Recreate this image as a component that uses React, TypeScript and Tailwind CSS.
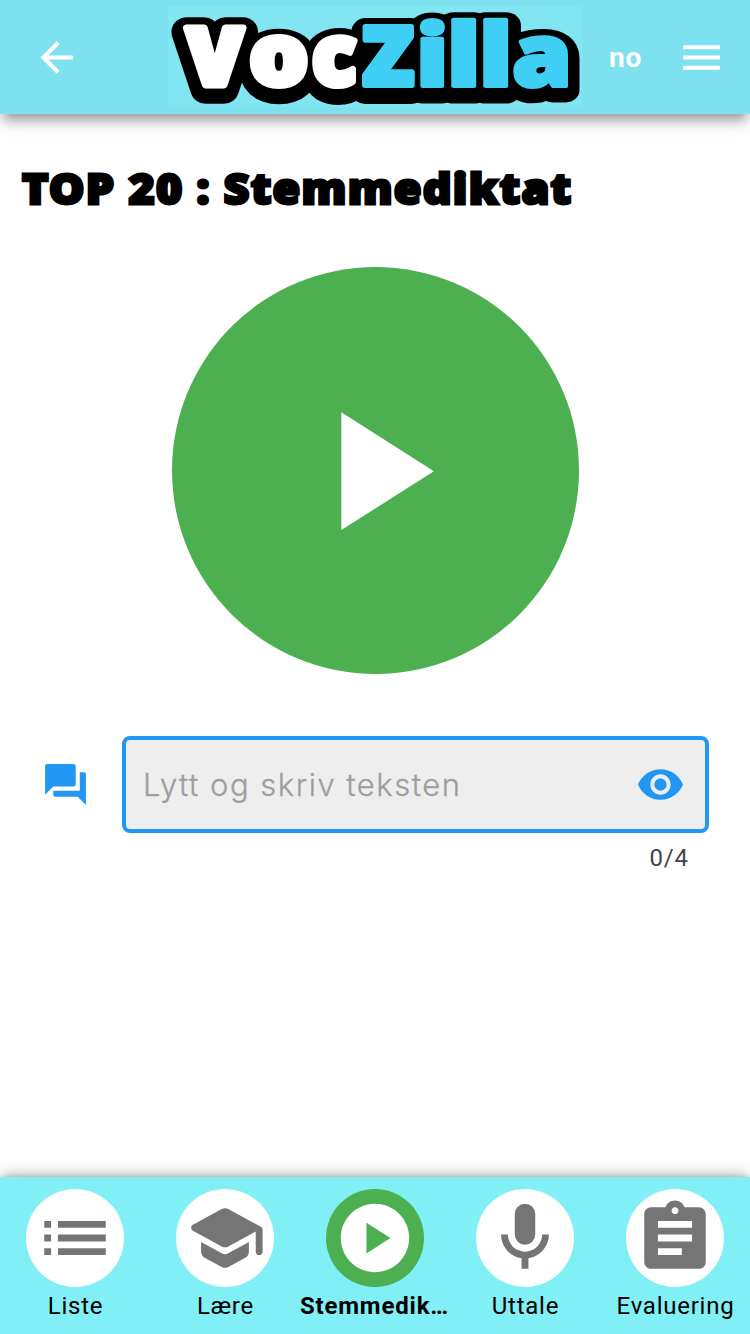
import React from "react";

const logoLetters = [
  { char: "V", x: 186.5, y: 84.5, sx: 0.814, sy: 0.803, face: 8.7, outline: 37, color: "#fff" },
  { char: "o", x: 249.3, y: 85.2, sx: 0.929, sy: 0.842, face: 7.4, outline: 31.7, color: "#fff" },
  { char: "c", x: 311.7, y: 85.2, sx: 0.833, sy: 0.842, face: 7.2, outline: 33.5, color: "#fff" },
  { char: "Z", x: 362.5, y: 85, sx: 0.839, sy: 0.817, face: 7.2, outline: 34, color: "#3fcff4" },
  { char: "i", x: 416, y: 86, sx: 1, sy: 0.857, face: 4.6, outline: 29, color: "#3fcff4" },
  { char: "l", x: 446.7, y: 86, sx: 1.05, sy: 0.868, face: 4.6, outline: 29, color: "#3fcff4" },
  { char: "l", x: 478.7, y: 86, sx: 1.05, sy: 0.868, face: 4.6, outline: 29, color: "#3fcff4" },
  { char: "a", x: 512.1, y: 85.5, sx: 0.962, sy: 0.862, face: 4.6, outline: 28.5, color: "#3fcff4" },
];

function Logo() {
  return (
    <svg
      className="h-[101px] w-[414px] shrink-0 overflow-visible bg-[#82e6f2] font-['Noto_Sans',sans-serif] text-[100px] font-black"
      viewBox="168 6 414 101"
      role="img"
    >
      <g aria-hidden="true" stroke="#000" strokeLinejoin="round" fill="#000">
        <rect x="270" y="46" width="18" height="34" stroke="none" />
        {logoLetters.map((l, i) => (
          <text key={i} strokeWidth={l.outline} transform={`translate(${l.x} ${l.y + 4.5}) scale(${l.sx} ${l.sy})`}>
            {l.char}
          </text>
        ))}
      </g>
      <g strokeLinejoin="round">
        {logoLetters.map((l, i) => (
          <text
            key={i}
            fill={l.color}
            stroke={l.color}
            strokeWidth={l.face}
            transform={`translate(${l.x} ${l.y}) scale(${l.sx} ${l.sy})`}
          >
            {l.char}
          </text>
        ))}
      </g>
    </svg>
  );
}

function Icon({ d, className }: { d: string; className: string }) {
  return (
    <svg viewBox="0 0 24 24" fill="currentColor" className={`shrink-0 ${className}`}>
      <path d={d} />
    </svg>
  );
}

const icons = {
  back: "M20,11V13H8L13.5,18.5L12.08,19.92L4.16,12L12.08,4.08L13.5,5.5L8,11H20Z",
  menu: "M3,6H21V8H3V6M3,11H21V13H3V11M3,16H21V18H3V16Z",
  play: "M8,5.14V19.14L19,12.14L8,5.14Z",
  forum:
    "M17,12V3A1,1 0 0,0 16,2H3A1,1 0 0,0 2,3V17L6,13H16A1,1 0 0,0 17,12M21,6H19V15H6V17A1,1 0 0,0 7,18H18L22,22V7A1,1 0 0,0 21,6Z",
  eye: "M12 4.5C7 4.5 2.73 7.61 1 12c1.73 4.39 6 7.5 11 7.5s9.27-3.11 11-7.5c-1.73-4.39-6-7.5-11-7.5zM12 17c-2.76 0-5-2.24-5-5s2.24-5 5-5 5 2.24 5 5-2.24 5-5 5zm0-8c-1.66 0-3 1.34-3 3s1.34 3 3 3 3-1.34 3-3-1.34-3-3-3z",
  list: "M3 13h2v-2H3v2zm0 4h2v-2H3v2zm0-8h2V7H3v2zm4 4h14v-2H7v2zm0 4h14v-2H7v2zM7 7v2h14V7H7z",
  school:
    "M5 13.18v2.81c0 .73.4 1.41 1.04 1.76l5 2.73c.6.33 1.32.33 1.92 0l5-2.73c.64-.35 1.04-1.03 1.04-1.76v-2.81l-6.04 3.3c-.6.33-1.32.33-1.92 0L5 13.18zm6.04-9.66l-8.43 4.6c-.69.38-.69 1.38 0 1.76l8.43 4.6c.6.33 1.32.33 1.92 0L21 10.09V16c0 .55.45 1 1 1s1-.45 1-1V9.59c0-.37-.2-.7-.52-.88l-9.52-5.19c-.6-.32-1.32-.32-1.92 0z",
  playCircle: "M12 2C6.48 2 2 6.48 2 12s4.48 10 10 10 10-4.48 10-10S17.52 2 12 2zm-2.5 14.5v-9l7 4.5-7 4.5z",
  mic: "M12,2A3,3 0 0,1 15,5V11A3,3 0 0,1 12,14A3,3 0 0,1 9,11V5A3,3 0 0,1 12,2M19,11C19,14.53 16.39,17.44 13,17.93V21H11V17.93C7.61,17.44 5,14.53 5,11H7A5,5 0 0,0 12,16A5,5 0 0,0 17,11H19Z",
  assignment:
    "M19 3h-4.18C14.4 1.84 13.3 1 12 1c-1.3 0-2.4.84-2.82 2H5c-1.1 0-2 .9-2 2v14c0 1.1.9 2 2 2h14c1.1 0 2-.9 2-2V5c0-1.1-.9-2-2-2zm-7 0c.55 0 1 .45 1 1s-.45 1-1 1-1-.45-1-1 .45-1 1-1zm2 14H7v-2h7v2zm3-4H7v-2h10v2zm0-4H7V7h10v2z",
};

const tabs = [
  { label: "Liste", icon: icons.list, active: false },
  { label: "Lære", icon: icons.school, active: false },
  { label: "Stemmediktat", icon: icons.playCircle, active: true },
  { label: "Uttale", icon: icons.mic, active: false },
  { label: "Evaluering", icon: icons.assignment, active: false },
];

export default function App() {
  return (
    <div className="flex h-[1334px] w-[750px] flex-col overflow-hidden bg-white font-['Roboto',sans-serif] text-black">
      <header className="flex h-[114px] shrink-0 items-start bg-[#7ee1f0] text-white shadow-[0_10px_10px_-4px_rgba(0,0,0,0.25),0_6px_18px_-1px_rgba(0,0,0,0.22)]">
        <button className="ml-[32px] mt-[33px]" aria-label="Back">
          <Icon d={icons.back} className="size-[49px]" />
        </button>
        <div className="ml-[87px] mt-[6px]">
          <Logo />
        </div>
        <span className="ml-[27px] mt-[40px] w-[68px] text-[28px] font-bold leading-[36px] tracking-[0.8px]">no</span>
        <button className="mt-[33px]" aria-label="Menu">
          <Icon d={icons.menu} className="size-[49px]" />
        </button>
      </header>

      <main className="flex grow flex-col">
        <h1 className="ml-[22px] mt-[44px] h-[60px] w-max origin-left scale-x-[1.055] whitespace-nowrap font-['Noto_Sans',sans-serif] text-[42.5px] font-black leading-[60px] tracking-[1.2px] [-webkit-text-stroke:2.8px_black]">
          TOP 20 : Stemmediktat
        </h1>
        <button
          aria-label="Play"
          className="mt-[49px] flex size-[407px] items-center justify-center self-center rounded-full bg-[#4caf50] text-white"
        >
          <Icon d={icons.play} className="mb-[2px] size-[202px]" />
        </button>
        <div className="mt-[62px] flex items-center pl-[41px]">
          <Icon d={icons.forum} className="size-[49px] text-[#2196f3]" />
          <label className="ml-[32px] flex h-[97px] w-[587px] items-center rounded-[8px] border-4 border-[#2196f3] bg-[#eee]">
            <input
              placeholder="Lytt og skriv teksten"
              className="ml-[17px] mt-[2px] w-[493px] bg-transparent font-['Inter',sans-serif] text-[31px] font-light tracking-[1.5px] outline-none [-webkit-text-stroke:0.3px_#9e9e9e] placeholder:text-[#9e9e9e]"
            />
            <Icon d={icons.eye} className="size-[49px] text-[#2196f3]" />
          </label>
        </div>
        <div className="mt-[10px] self-end pr-[61px] text-[24px] leading-[30px] tracking-[0.9px] text-[#44444c]">0/4</div>
      </main>

      <nav className="grid h-[157px] shrink-0 grid-cols-5 bg-[#80f0f6] shadow-[0_-1px_8px_-2px_rgba(0,0,0,0.35),0_-3px_16px_-1px_rgba(0,0,0,0.22)]">
        {tabs.map((tab) => (
          <button key={tab.label} className="flex min-w-0 flex-col items-center pt-[12px]">
            <span
              className={
                tab.active
                  ? "flex size-[98px] items-center justify-center rounded-full bg-[#4caf50] text-white"
                  : "flex size-[98px] items-center justify-center rounded-full bg-white text-[#757575]"
              }
            >
              <Icon d={tab.icon} className="size-[82px]" />
            </span>
            <span
              className={
                tab.active
                  ? "mt-[4px] w-[150px] truncate text-center text-[24px] font-bold leading-[30px] tracking-[0.8px]"
                  : "mt-[4px] w-[150px] truncate pl-[1px] text-center text-[24px] leading-[30px] tracking-[0.75px]"
              }
            >
              {tab.label}
            </span>
          </button>
        ))}
      </nav>
    </div>
  );
}
